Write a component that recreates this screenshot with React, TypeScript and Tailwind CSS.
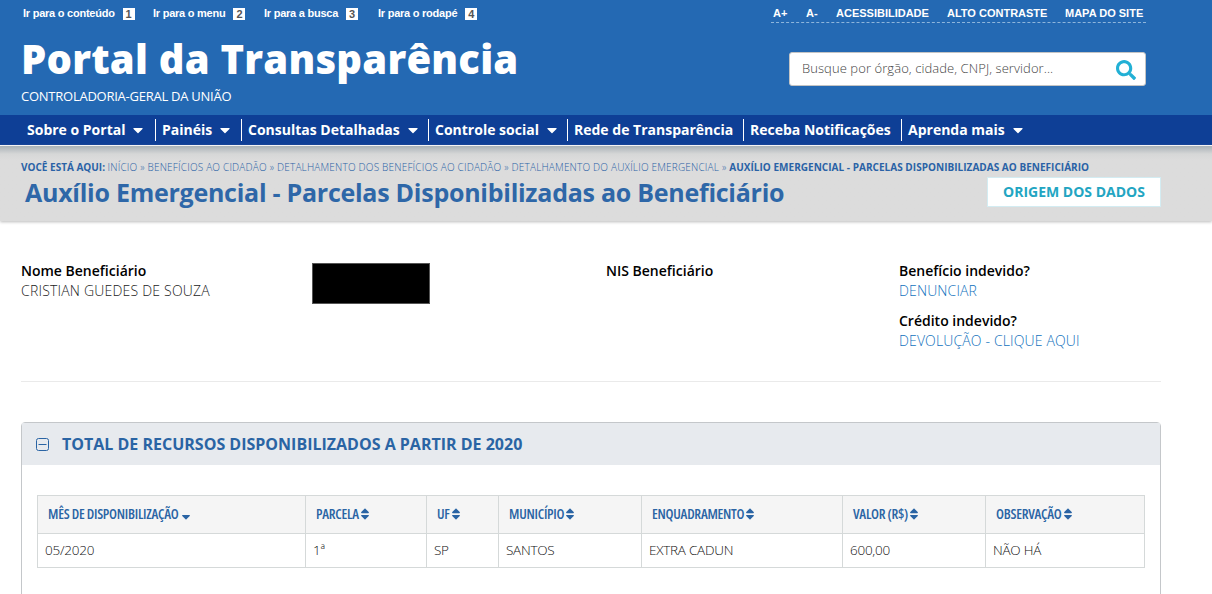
import React from 'react';
import { FaCaretDown, FaSearch, FaSort, FaSortDown } from 'react-icons/fa';

interface NavItem {
  label: string;
  width: string;
  menu?: boolean;
}

const skipLinks = [
  { label: 'Ir para o conteúdo', key: '1', width: 'w-[130px]' },
  { label: 'Ir para o menu', key: '2', width: 'w-[111px]' },
  { label: 'Ir para a busca', key: '3', width: 'w-[114px]' },
  { label: 'Ir para o rodapé', key: '4', width: 'w-[120px]' },
];

const accessLinks = [
  { label: 'A+', width: 'w-[33px]' },
  { label: 'A-', width: 'w-[30px]' },
  { label: 'ACESSIBILIDADE', width: 'w-[111px]' },
  { label: 'ALTO CONTRASTE', width: 'w-[118px]' },
  { label: 'MAPA DO SITE', width: 'w-[81px]' },
];

const navItems: NavItem[] = [
  { label: 'Sobre o Portal', width: 'w-[135px]', menu: true },
  { label: 'Painéis', width: 'w-[86px]', menu: true },
  { label: 'Consultas Detalhadas', width: 'w-[187px]', menu: true },
  { label: 'Controle social', width: 'w-[139px]', menu: true },
  { label: 'Rede de Transparência', width: 'w-[176px]' },
  { label: 'Receba Notificações', width: 'w-[158px]' },
  { label: 'Aprenda mais', width: 'w-[130px]', menu: true },
];

const crumbs = [
  'Início',
  'Benefícios ao Cidadão',
  'Detalhamento dos Benefícios ao Cidadão',
  'Detalhamento do Auxílio Emergencial',
];

const columns = [
  { title: 'Mês de Disponibilização', value: '05/2020', width: 'w-[268px]', sorted: true },
  { title: 'Parcela', value: '1ª', width: 'w-[121px]' },
  { title: 'UF', value: 'SP', width: 'w-[72px]' },
  { title: 'Município', value: 'SANTOS', width: 'w-[143px]' },
  { title: 'Enquadramento', value: 'EXTRA CADUN', width: 'w-[201px]' },
  { title: 'Valor (R$)', value: '600,00', width: 'w-[143px]' },
  { title: 'Observação', value: 'NÃO HÁ', width: 'w-[159px]' },
];

const Header = () => (
  <header className="h-[115px] bg-[#2469b3] pl-[21px] text-white">
    <div className="flex h-[115px] w-[1125px] justify-between">
      <div>
        <ul className="flex h-[27px] items-center pl-[2px] font-['Liberation_Sans'] text-[11px] font-bold">
          {skipLinks.map((link) => (
            <li key={link.key} className={`flex items-center whitespace-nowrap ${link.width}`}>
              <span className="tracking-[-0.24px]">{link.label}</span>
              <span className="ml-[8px] h-3 w-3 bg-white text-center leading-3 text-[#555]">{link.key}</span>
            </li>
          ))}
        </ul>
        <h1 className="mt-[5px] text-[40px] leading-[54px] font-extrabold tracking-[0.22px] whitespace-nowrap">
          Portal da Transparência
        </h1>
        <p className="text-[13px] leading-5 tracking-[-0.25px]">CONTROLADORIA-GERAL DA UNIÃO</p>
      </div>

      <div className="flex flex-col items-end">
        <ul className="flex h-[23px] items-center border-b border-dashed border-[#8db5dc] pt-1 pl-[2px] font-['Liberation_Sans'] text-[11px] font-bold">
          {accessLinks.map((link) => (
            <li key={link.label} className={`whitespace-nowrap ${link.width}`}>{link.label}</li>
          ))}
        </ul>
        {/* Search */}
        <div className="mt-[29px] flex h-[34px] w-[357px] items-center justify-between rounded-[3px] border border-[#c4c4c4] bg-white pr-[9px] pl-3">
          <span className="text-[13px] font-light tracking-[0.08px] text-[#444]">Busque por órgão, cidade, CNPJ, servidor...</span>
          <FaSearch size={20} className="mt-[2px] text-[#22b0d5]" />
        </div>
      </div>
    </div>
  </header>
);

const Nav = () => (
  <nav className="flex h-[30px] items-center bg-[#0e3f96] pl-[21px]">
    {navItems.map((item, i) => (
      <a
        key={item.label}
        className={`
          flex h-[22px] items-center pb-[2px] pl-[6px] text-[14px] font-bold whitespace-nowrap text-white
          ${item.width}
          ${i < navItems.length - 1 ? 'border-r border-white' : ''}
        `}
      >
        {item.label}
        {item.menu && <FaCaretDown size={16} className="mt-px ml-[5px]" />}
      </a>
    ))}
  </nav>
);

const TitleBar = () => (
  <section className="mt-px h-[75px] bg-[#dcdcdc] bg-linear-to-b from-[#a9b2b7] via-[#d6d7d7] via-[8px] to-[#dcdcdc] to-[14px] pl-[21px] text-[#2e67a8] shadow-[0_1px_3px_#bbb]">
    <p className="pt-[15px] text-[10px] leading-[13px] whitespace-nowrap text-[#2a62a6] uppercase">
      <span className="font-bold">Você está aqui: </span>
      <span className="font-light tracking-[0.195px]">
        {crumbs.map((crumb) => (
          <React.Fragment key={crumb}>{crumb} » </React.Fragment>
        ))}
      </span>
      <span className="font-bold tracking-[0.03px]">Auxílio Emergencial - Parcelas Disponibilizadas ao Beneficiário</span>
    </p>
    <div className="flex w-[1140px] items-start justify-between pl-1">
      <h2 className="text-[25px] leading-[37px] font-bold tracking-[-0.26px] whitespace-nowrap">
        Auxílio Emergencial - Parcelas Disponibilizadas ao Beneficiário
      </h2>
      <button className="mt-[3px] h-[30px] w-[174px] border border-[#d3ecf2] bg-white pb-[2px] text-[14px] font-bold text-[#22a5c2]">
        ORIGEM DOS DADOS
      </button>
    </div>
  </section>
);

const Beneficiary = () => (
  <section className="flex h-[121px] w-[1140px] border-b border-[#eaeaea] text-[14px] leading-5 text-[#222]">
    <div className="w-[291px]">
      <strong className="block font-semibold text-black">Nome Beneficiário</strong>
      <span className="font-light tracking-[0.2px]">CRISTIAN GUEDES DE SOUZA</span>
    </div>
    <div className="w-[294px]">
      <div className="mt-[2px] h-[41px] w-[118px] border border-[#555] bg-black" />
    </div>
    <div className="w-[292px]">
      <strong className="block font-semibold text-black">NIS Beneficiário</strong>
    </div>
    <div className="flex flex-col gap-[10px] pl-[1px]">
      <div>
        <strong className="block font-semibold text-black">Benefício indevido?</strong>
        <a className="font-light tracking-[0.14px] text-[#1272bd]">DENUNCIAR</a>
      </div>
      <div>
        <strong className="block font-semibold text-black">Crédito indevido?</strong>
        <a className="font-light tracking-[0.14px] text-[#1272bd]">DEVOLUÇÃO - CLIQUE AQUI</a>
      </div>
    </div>
  </section>
);

const Resources = () => (
  <section className="mt-[40px] h-[220px] w-[1140px] rounded-t border border-[#c4c7ca]">
    <h3 className="flex h-[42px] items-center bg-[#e7eaee] pl-[14px] text-[16px] font-bold text-[#2a64a4]">
      <svg width="13" height="13" viewBox="0 0 13 13" fill="none" stroke="currentColor" className="mr-[13px]">
        <rect x="0.5" y="0.5" width="12" height="12" rx="2" />
        <path d="M2.5 6.5h8" />
      </svg>
      TOTAL DE RECURSOS DISPONIBILIZADOS A PARTIR DE 2020
    </h3>
    <table className="mt-[30px] ml-[15px] w-[1107px] table-fixed border-collapse text-left">
      <thead>
        <tr className="h-[38px] bg-[#f5f5f5]">
          {columns.map((col) => (
            <th key={col.title} className={`border border-[#d5d9d9] pb-[2px] pl-[10px] ${col.width}`}>
              <span className="flex items-center text-[14px] font-semibold tracking-[-0.25px] whitespace-nowrap text-[#2a64a4] uppercase font-stretch-condensed">
                {col.title}
                {col.sorted ? <FaSortDown size={14} /> : <FaSort size={14} className="-ml-px" />}
              </span>
            </th>
          ))}
        </tr>
      </thead>
      <tbody>
        <tr className="h-[34px]">
          {columns.map((col) => (
            <td key={col.title} className="border border-[#d5d9d9] pb-[2px] pl-[7px] text-[13.5px] leading-5 font-light tracking-[-0.25px] text-[#111]">
              {col.value}
            </td>
          ))}
        </tr>
      </tbody>
    </table>
  </section>
);

export default function App() {
  return (
    <div className="h-[594px] w-[1212px] overflow-hidden bg-white font-['Open_Sans',sans-serif]">
      <Header />
      <Nav />
      <TitleBar />
      <main className="pt-[40px] pl-[21px]">
        <Beneficiary />
        <Resources />
      </main>
    </div>
  );
}
